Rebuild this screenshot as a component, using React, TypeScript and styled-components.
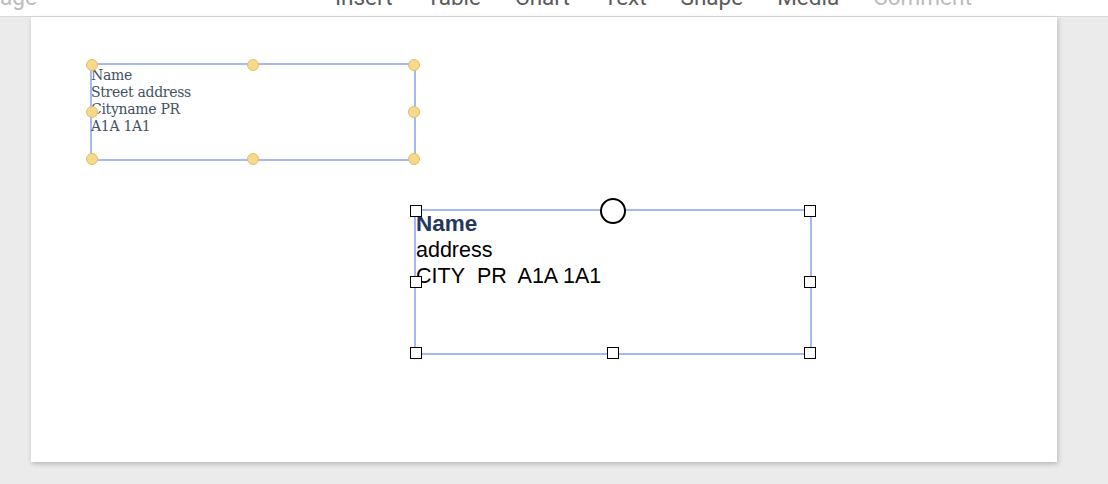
import styled, { createGlobalStyle } from "styled-components";

const GlobalStyle = createGlobalStyle`
  html, body {
    margin: 0;
    padding: 0;
    background: #ebebeb;
    overflow: hidden;
  }
`;

type HandleSpot = { x: number; y: number };

const corners: HandleSpot[] = [
  { x: 0, y: 0 },
  { x: 50, y: 0 },
  { x: 100, y: 0 },
  { x: 0, y: 50 },
  { x: 100, y: 50 },
  { x: 0, y: 100 },
  { x: 50, y: 100 },
  { x: 100, y: 100 },
];

const menuItems = ["Insert", "Table", "Chart", "Text", "Shape", "Media"];

const App = () => {
  return (
    <Screen>
      <GlobalStyle />
      <Toolbar>
        <MenuRow>
          <MenuItem $muted $first>
            Page
          </MenuItem>
          <CenterGroup>
            {menuItems.map((item) => (
              <MenuItem key={item}>{item}</MenuItem>
            ))}
            <MenuItem $muted>Comment</MenuItem>
          </CenterGroup>
        </MenuRow>
      </Toolbar>
      <Canvas>
        <Sheet>
          <AddressBox>
            <SerifText>
              Name
              <br />
              Street address
              <br />
              Cityname PR
              <br />
              A1A 1A1
            </SerifText>
            {corners.map((c, i) => (
              <Dot key={i} style={{ left: `${c.x}%`, top: `${c.y}%` }} />
            ))}
          </AddressBox>

          <SelectedBox>
            <SansText>
              <BoldName>Name</BoldName>
              <div>address</div>
              <div>CITY&nbsp; PR&nbsp; A1A 1A1</div>
            </SansText>
            {corners
              .filter((c) => !(c.x === 50 && c.y === 0))
              .map((c, i) => (
                <Square key={i} style={{ left: `${c.x}%`, top: `${c.y}%` }} />
              ))}
            <RotateKnob />
          </SelectedBox>
        </Sheet>
      </Canvas>
    </Screen>
  );
};

const Screen = styled.div`
  width: 1108px;
  height: 484px;
  background: #ebebeb;
`;

const Toolbar = styled.div`
  height: 16px;
  background: #ffffff;
  border-bottom: 1px solid #d8d8d8;
  overflow: hidden;
`;

const MenuRow = styled.div`
  display: flex;
  align-items: flex-start;
  margin-top: -14px;
  font-family: Roboto, "Liberation Sans", sans-serif;
  font-size: 22.5px;
  line-height: 22px;
`;

const CenterGroup = styled.div`
  display: flex;
  gap: 34px;
  margin-left: 298px;
`;

const MenuItem = styled.span<{ $muted?: boolean; $first?: boolean }>`
  color: ${(p) => (p.$muted ? "#bcbcbc" : "#5a5a5a")};
  margin-left: ${(p) => (p.$first ? "-14px" : "0")};
  white-space: nowrap;
`;

const Canvas = styled.div`
  padding-left: 31px;
`;

const Sheet = styled.div`
  position: relative;
  width: 1026px;
  height: 445px;
  background: #ffffff;
  box-shadow: 1px 2px 5px rgba(0, 0, 0, 0.22);
`;

const AddressBox = styled.div`
  position: absolute;
  left: 59px;
  top: 46px;
  width: 326px;
  height: 98px;
  box-sizing: border-box;
  border: 2px solid #a6b9f6;
`;

const SerifText = styled.div`
  padding-top: 2px;
  margin-left: -1px;
  font-family: "DejaVu Serif", "Liberation Serif", serif;
  font-size: 14px;
  line-height: 17px;
  color: #44525f;
  letter-spacing: -0.3px;
`;

const Dot = styled.span`
  position: absolute;
  width: 12px;
  height: 12px;
  margin: -6px 0 0 -6px;
  box-sizing: border-box;
  border-radius: 50%;
  background: #f7d88c;
  border: 1px solid #e6bd62;
`;

const SelectedBox = styled.div`
  position: absolute;
  left: 383px;
  top: 192px;
  width: 398px;
  height: 146px;
  box-sizing: border-box;
  border: 2px solid #a6b9f6;
`;

const SansText = styled.div`
  font-family: "Liberation Sans", Arial, sans-serif;
  font-size: 21.5px;
  line-height: 26px;
  color: #000000;
`;

const BoldName = styled.div`
  font-weight: bold;
  font-size: 22.5px;
  color: #26375f;
`;

const Square = styled.span`
  position: absolute;
  width: 12px;
  height: 12px;
  margin: -6px 0 0 -6px;
  box-sizing: border-box;
  background: #ffffff;
  border: 1px solid #000000;
`;

const RotateKnob = styled.span`
  position: absolute;
  left: 50%;
  top: 0;
  width: 26px;
  height: 26px;
  margin: -13px 0 0 -13px;
  box-sizing: border-box;
  border-radius: 50%;
  background: #ffffff;
  border: 2px solid #000000;
`;

export default App;
